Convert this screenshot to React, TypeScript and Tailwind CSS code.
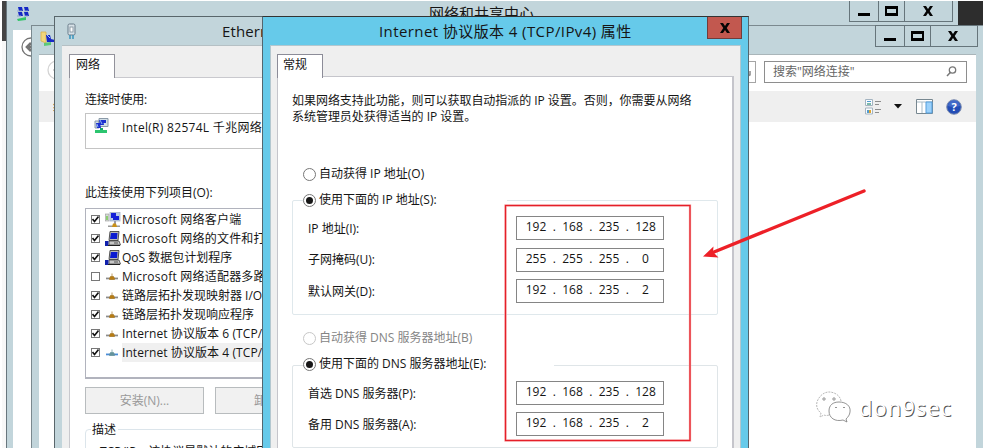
import React from "react";

const ui = "font-['Open_Sans','Noto_Sans_CJK_SC',sans-serif]";

function Computer({ tone }: { tone: string }) {
  return (
    <svg width="16" height="16" viewBox="0 0 16 16" className="shrink-0">
      {tone === "client" && (
        <>
          <rect x="0.500" y="2" width="3.500" height="7" fill="#d5dad5" stroke="#999" strokeWidth=".6" />
          <rect x="1" y="4" width="2" height="4" fill="#8ccf70" />
          <rect x="5" y=".5" width="10" height="8.500" fill="#b9cbe6" stroke="#a5b1c8" strokeWidth=".8" />
          <path d="M6 1h5v3h3v4H8V6H6z" fill="#1420d8" />
          <path d="M9 9h2v3H9z" fill="#99a" />
          <path d="M3 13.500h12v1.500H3z" fill="#999" />
          <path d="M8 11.500h3l1 3.500H7z" fill="#c99018" />
        </>
      )}
      {tone === "service" && (
        <>
          <path d="M5 .5h9l-1 9H4z" fill="#b8b8b8" stroke="#444" strokeWidth=".9" />
          <path d="M6 2h6.500l-.5 6H5z" fill="#0a1ad0" />
          <path d="M4 10h10l1.500 4H4z" fill="#c8c8c8" stroke="#444" strokeWidth=".8" />
          <path d="M0 10h3.500v5H0z" fill="#1020ad" />
          <path d="M3 14h12v1H3z" fill="#222" />
          <path d="M9 12h4" stroke="#555" />
        </>
      )}
    </svg>
  );
}

function Protocol({ blue = false }: { blue?: boolean }) {
  return (
    <svg width="16" height="16" viewBox="0 0 16 16" className="shrink-0">
      <path d="M1 9.500h12" stroke={blue ? "#3f83d2" : "#808080"} strokeWidth="1.600" />
      <path d="M1 8.700h12" stroke={blue ? "#9bc2ed" : "#c9c9c9"} strokeWidth=".8" />
      <path d="M7 4.500v3M4.500 9.500l1-2h3l1 2v1h-5z" fill={blue ? "#65939a" : "#b87c12"} stroke={blue ? "#65939a" : "#a57622"} strokeWidth=".7" />
    </svg>
  );
}

function NetIcon({ folder = false }: { folder?: boolean }) {
  return (
    <svg width="16" height="16" viewBox="0 0 16 16">
      {folder ? (
        <>
          <path d="M1 1h5v11l-5-2z" fill="#f2d77c" stroke="#dab14c" strokeWidth=".8" />
          <path d="M6 4h4l1 4 4 1v2H7z" fill="#1728c7" />
          <path d="M7 4l3 3" stroke="#a9c8f0" />
          <path d="M4 12l7-1v3l-7 1z" fill="#5dc878" />
        </>
      ) : (
        <>
          <path d="M3 1h4l1 4H4zM9 1h4l1 4h-4zM3 6h4l1 4H4zM9 6h4l1 4h-4z" fill="#1527c4" />
          <path d="M2 5h5M9 5h4M2 10h4M9 10h4" stroke="#8ea5cf" />
          <path d="M2 13l9-2v3l-8 1z" fill="#32c567" />
        </>
      )}
    </svg>
  );
}

function Adapter() {
  return (
    <svg width="17" height="18" viewBox="0 0 17 18" className="shrink-0">
      <path d="M1 4h4v7H1zM5 1.500h9v8H5z" fill="#d3e0e8" stroke="#8b9aa8" />
      <path d="M5 3h4l1 5H6zM2 6h4l1 5H3zM9 3h3v3H9z" fill="#1c30d0" />
      <path d="M6 3l2 4M3 7l1 3" stroke="#91b4ef" />
      <path d="M6 11h3v3H6z" fill="#18a768" />
      <path d="M1 13h12v3H1z" fill="#2cc56f" />
    </svg>
  );
}

function Plug() {
  return (
    <svg width="9" height="17" viewBox="0 0 9 17" className="shrink-0">
      <rect x="1" y="1" width="7" height="11" rx="1.500" fill="#d8e2e8" stroke="#697b88" />
      <rect x="3" y="4" width="3" height="5" fill="#fff" stroke="#7b8c98" strokeWidth=".8" />
      <path d="M3 12v4M6 12v4" stroke="#3994bd" strokeWidth="1.500" />
    </svg>
  );
}

function BackArrow({ faded = false }: { faded?: boolean }) {
  const color = faded ? "#d4d4d4" : "#747474";
  return (
    <svg width="20" height="20" viewBox="0 0 20 20" fill="none" stroke={color}>
      <circle cx="10" cy="10" r="9" strokeWidth="1.300" />
      <path d="M15 10H6m4-4l-4 4 4 4" strokeWidth={faded ? 1 : 2.6} />
    </svg>
  );
}

function CloseX() {
  return (
    <svg width="10" height="10" viewBox="0 0 10 10">
      <path d="M0 0h3l2 3 2-3h3L6.700 5 10 10H7L5 7l-2 3H0l3.300-5z" fill="#050505" />
    </svg>
  );
}

function WindowButtons({ second = false }: { second?: boolean }) {
  return (
    <div className={`ml-auto flex border-b border-l border-r border-[#66757b] ${second ? "h-[22px] w-[103px] border-t" : "h-[21px] w-[104px]"}`}>
      <div className="flex w-[29px] items-end justify-center border-r border-[#66757b] pb-[5px]"><span className="h-[3px] w-3 bg-black" /></div>
      <div className="flex w-[26px] items-center justify-center border-r border-[#66757b] pr-px"><span className="h-[10px] w-[13px] border-[3px] border-x-[2px] border-black" /></div>
      <div className="flex flex-1 items-center justify-center pr-[2px]"><CloseX /></div>
    </div>
  );
}

const services = [
  ["Microsoft 网络客户端", "client"],
  ["Microsoft 网络的文件和打印机共享", "service"],
  ["QoS 数据包计划程序", "service"],
  ["Microsoft 网络适配器多路传送器协议", "off"],
  ["链路层拓扑发现映射器 I/O 驱动程序", "line"],
  ["链路层拓扑发现响应程序", "line"],
  ["Internet 协议版本 6 (TCP/IPv6)", "line"],
  ["Internet 协议版本 4 (TCP/IPv4)", "selected"],
];

function CheckRow({ text, kind }: { text: string; kind: string }) {
  const spacing = text.startsWith("Microsoft") ? "tracking-[0.22px]" : text.startsWith("Internet") ? "tracking-[0.08px]" : "tracking-[0px]";
  return (
    <div className="flex h-[19px] items-center pl-[5px]">
      <span className="flex size-[9px] shrink-0 items-center justify-center border border-[#777] bg-white">
        {kind !== "off" && <svg width="7" height="7" viewBox="0 0 7 7"><path d="M.5 3l2 2.500L6.500.5" fill="none" stroke="#111" strokeWidth="1.600" /></svg>}
      </span>
      <span className="ml-[5px] mr-px">{kind === "client" || kind === "service" ? <Computer tone={kind} /> : <Protocol blue={kind === "selected"} />}</span>
      <span className={`h-[19px] shrink-0 whitespace-nowrap leading-[19px] ${spacing} ${kind === "selected" ? "w-[180px] bg-[#f0f0f0]" : ""}`}>{text}</span>
    </div>
  );
}

function Radio({ text, checked = false, disabled = false }: { text: string; checked?: boolean; disabled?: boolean }) {
  return (
    <div className={`flex h-[16px] items-center bg-white whitespace-nowrap ${disabled ? "text-[#858585]" : ""}`}>
      <span className={`mr-[3px] flex size-[13px] shrink-0 items-center justify-center rounded-full border ${disabled ? "border-[#c7c7c7]" : "border-[#777]"}`}>
        {checked && <span className="size-[7px] rounded-full bg-[#171717]" />}
      </span>
      <span className="leading-[16px]">{text}</span>
    </div>
  );
}

function AddressRow({ label, parts }: { label: string; parts: string[] }) {
  return (
    <div className="flex h-[24px] items-center pl-[15px]">
      <span className="w-[208px] shrink-0 whitespace-nowrap pt-px">{label}</span>
      <div className="flex h-[24px] w-[148px] items-center border border-[#858585] bg-white pb-[2px] pl-[4px] text-[12px]">
        {parts.map((part, i) => (
          <React.Fragment key={i}>
            <span className="w-[30px] text-center">{part}</span>
            {i < 3 && <span className="w-[6.500px] text-center">.</span>}
          </React.Fragment>
        ))}
      </div>
    </div>
  );
}

function SharingWindow() {
  return (
    <section className="absolute left-[6px] top-px h-[460px] w-[952px] border-l border-[#68767d] bg-[#c2d5db]">
      <header className="flex h-[29px] pl-[8px] pr-[5px]">
        <div className="pt-[5px]"><NetIcon /></div>
        <span className="ml-[398px] pt-[2px] text-[15px] leading-[21px] whitespace-nowrap">网络和共享中心</span>
        <WindowButtons />
      </header>
      <div className="ml-[6px] h-full bg-white pl-[8px] pt-[7px]"><BackArrow /></div>
    </section>
  );
}

function ConnectionsWindow() {
  return (
    <section className="absolute left-[31px] top-[25px] h-[430px] w-[952px] border-l border-t border-[#7b898f] bg-[#c2d5db]">
      <header className="-mt-px flex h-[29px] pl-[8px] pr-[5px]">
        <div className="pt-[6px]"><NetIcon folder /></div>
        <WindowButtons second />
      </header>
      <div className="ml-[7px] mr-[7px] h-full border-t border-[#a9b5b9] bg-white">
        <div className="flex h-[36px] items-start pr-[9px] pt-[6px]">
          <span className="ml-[8px] mt-[-1px]"><BackArrow faded /></span>
          <div className="ml-auto mr-[8px] flex h-[22px] w-[25px] items-center justify-end border border-[#a5a5a5] pr-[3px]">
            <svg width="9" height="12" viewBox="0 0 9 12"><path d="M2 2a4 4 0 1 0 5 7V5m0 4H4" fill="none" stroke="#888" strokeWidth="1.500" /></svg>
          </div>
          <div className="flex h-[22px] w-[203px] items-center border border-[#8e8e8e] pl-[8px] pr-[9px] text-[12px] text-[#666]">
            <span>搜索"网络连接"</span>
            <svg className="ml-auto" width="11" height="12" viewBox="0 0 11 12"><circle cx="6.500" cy="4" r="3.200" fill="none" stroke="#777" strokeWidth="1.300" /><path d="M4.300 6.500L1 10" stroke="#777" strokeWidth="1.500" /></svg>
          </div>
        </div>
        <div className="flex h-[31px] items-center bg-[#efefef] pl-[14px] pr-[14px]">
          <span className="text-[12px]">组织</span>
          <div className="ml-auto flex items-center">
            <svg width="17" height="16" viewBox="0 0 17 16"><path d="M.5.5h7v6h-7zM.5 9h7v6h-7z" fill="#f8fcff" stroke="#a4b4c1" /><path d="M2 2h4v1H2zM2 11h3v3H2z" fill="#519bd1" /><path d="M2 5h4" stroke="#55a48e" strokeWidth="1.500" /><path d="M4 11h2v3H4z" fill="#e1a42c" /><path d="M10 2.500h6M10 5.500h4M10 10.500h6M10 13.500h4" stroke="#8d8d8d" /></svg>
            <svg className="ml-[12px]" width="8" height="5" viewBox="0 0 8 5"><path d="M0 0h8L4 4.500z" fill="#111" /></svg>
            <svg className="ml-[14px]" width="17" height="15" viewBox="0 0 17 15"><path d="M.5.5h16v14H.5z" fill="#fff" stroke="#778790" /><path d="M1 3h15M6 3v11" stroke="#a8bbc7" /><path d="M10 3h6v11h-6z" fill="#9bd1fb" stroke="#559dda" /></svg>
            <svg className="ml-[13px]" width="16" height="16" viewBox="0 0 16 16"><circle cx="8" cy="8" r="7.300" fill="#234db6" stroke="#8190b0" /><path d="M2 7a6 6 0 0 1 12 0q-6 2-12 0" fill="#668cde" opacity=".45" /><text x="8" y="12" textAnchor="middle" fontSize="11" fontWeight="700" fill="white">?</text></svg>
          </div>
        </div>
        <div className="ml-[14px] mt-[8px] h-[53px] w-[2px] border-r border-[#b5b5b5]" />
      </div>
    </section>
  );
}

function AdapterWindow() {
  return (
    <section className="absolute left-[54px] top-[16px] h-[440px] w-[360px] border-l border-t border-[#59666b] bg-[#c2d5db] pl-[7px]">
      <header className="flex h-[28px] pl-[5px] pt-[6px]">
        <Plug />
        <span className="ml-[146px] mt-[-2px] whitespace-nowrap text-[15px] leading-[20px] tracking-[0.1px]">Ethernet0 属性</span>
      </header>
      <div className="h-full border-t border-[#b5c0c4] bg-[#efefef] pl-[7px] pt-[8px]">
        <div className="relative z-10 flex h-[24px] w-[46px] items-start border border-b-0 border-[#92929b] bg-white pl-[6px] pt-px">网络</div>
        <div className="-mt-px h-[400px] border-l border-t border-[#c9c9ce] bg-white pl-[15px]">
          <p className="pt-[13px] leading-[18px] tracking-[-0.2px]">连接时使用:</p>
          <div className="mt-[4px] flex h-[36px] border border-[#c4c4c4] pl-[8px] pt-[3px]">
            <Adapter /><span className="ml-[11px] whitespace-nowrap pt-[2px] tracking-[0.3px]">Intel(R) 82574L 千兆网络连接</span>
          </div>
          <p className="mt-[35px] leading-[18px]">此连接使用下列项目(O):</p>
          <div className="mt-[6px] h-[171px] border border-b-2 border-[#b1b3bd] pt-[1px]">
            {services.map(([text, kind]) => <CheckRow key={text} text={text} kind={kind} />)}
          </div>
          <div className="mt-[8px] flex gap-[11px] text-[#999]">
            <div className="flex h-[27px] w-[119px] items-center justify-center border border-[#b8bcbe] bg-[#f1f1f1]">安装(N)...</div>
            <div className="flex h-[27px] w-[119px] items-center justify-start border border-[#b8bcbe] bg-[#f1f1f1] pl-[38px]">卸载(U)</div>
          </div>
          <div className="mt-[15px] h-[80px] rounded border border-[#dce5eb] pl-[5px]">
            <p className="mt-[-9px] w-[27px] bg-white px-px leading-[18px]">描述</p>
            <p className="mt-[4px] pl-[9px] leading-[18px] whitespace-nowrap">TCP/IP。该协议是默认的广域网络协议</p>
          </div>
        </div>
      </div>
    </section>
  );
}

function TcpWindow() {
  return (
    <section className="absolute left-[262px] top-[16px] h-[440px] w-[487px] border-x border-t border-x-[#53666f] border-t-[#333] bg-[#66caea]">
      <header className="flex h-[28px] pr-[6px]">
        <h1 className="ml-[116px] pt-[4px] text-[15px] leading-[20px] tracking-[0.41px] whitespace-nowrap">Internet 协议版本 4 (TCP/IPv4) 属性</h1>
        <div className="ml-auto flex h-[22px] w-[35px] items-center justify-center border border-t-0 border-[#713c3b] bg-[#c2584f]"><CloseX /></div>
      </header>
      <div className="mx-[7px] h-full border border-[#b3c7cf] bg-[#efefef] px-[6px] pt-[8px]">
        <div className="relative z-10 flex h-[24px] w-[46px] items-start border border-b-0 border-[#8c8c98] bg-white pl-[5px] pt-px">常规</div>
        <div className="-mt-[2px] h-[400px] w-[457px] border border-r-2 border-[#c5c5cb] bg-white pl-[14px] pr-[14px]">
          <p className="h-[89px] pt-[16px] leading-[16px] tracking-[-0.04px] whitespace-nowrap">如果网络支持此功能，则可以获取自动指派的 IP 设置。否则，你需要从网络<br />系统管理员处获得适当的 IP 设置。</p>
          <div className="pl-[11px]"><Radio text="自动获得 IP 地址(O)" /></div>
          <div className="mt-[18px] h-[115px] w-[426px] rounded-[2px] border border-[#dfe8ec]">
            <div className="-mt-[9px] ml-[10px] w-[204px]"><Radio checked text="使用下面的 IP 地址(S):" /></div>
            <div className="mt-[8px] flex flex-col gap-[7.500px]">
              <AddressRow label="IP 地址(I):" parts={["192", "168", "235", "128"]} />
              <AddressRow label="子网掩码(U):" parts={["255", "255", "255", "0"]} />
              <AddressRow label="默认网关(D):" parts={["192", "168", "235", "2"]} />
            </div>
          </div>
          <div className="mt-[15px] pl-[11px]"><Radio disabled text="自动获得 DNS 服务器地址(B)" /></div>
          <div className="mt-[19px] h-[83px] w-[426px] rounded-[2px] border border-[#dfe5e8]">
            <div className="-mt-[10px] ml-[10px] w-[251px]"><Radio checked text="使用下面的 DNS 服务器地址(E):" /></div>
            <div className="mt-[9px] flex flex-col gap-[7px]">
              <AddressRow label="首选 DNS 服务器(P):" parts={["192", "168", "235", "128"]} />
              <AddressRow label="备用 DNS 服务器(A):" parts={["192", "168", "235", "2"]} />
            </div>
          </div>
        </div>
      </div>
    </section>
  );
}

export default function App() {
  return (
    <main className={`relative h-[448px] w-[983px] overflow-hidden bg-white text-[12px] text-[#151515] ${ui}`}>
      <div className="flex h-full">
        <div className="mt-px ml-[2px] flex h-full w-[4px] flex-col bg-[#f8f8f8]"><span className="h-[40px] bg-[#444]" /></div>
        <div className="mt-px ml-auto h-[25px] w-[26px] bg-[#2d2d2d]" />
      </div>
      <SharingWindow />
      <ConnectionsWindow />
      <AdapterWindow />
      <TcpWindow />
      <svg className="pointer-events-none absolute inset-0" width="983" height="448" viewBox="0 0 983 448">
        <rect x="505.500" y="205.500" width="184.500" height="235" fill="none" stroke="#f9b8b8" strokeWidth="2.400" />
        <rect x="505.500" y="205.500" width="184.500" height="235" fill="none" stroke="#e51f29" strokeWidth="1.300" />
        <path d="M864 191L714 252" stroke="#ed2027" strokeWidth="3.400" strokeLinecap="round" />
        <path d="M703 256.500L713.500 246.500L713 252L718.500 257.500z" fill="#ed2027" />
      </svg>
      <div className="absolute left-[816px] top-[391px] flex items-center">
        <svg width="37" height="32" viewBox="0 0 37 32">
          <path d="M13 24q-3 1-5 0l-4 2 1-4C1 19 0 15 1 11 3 5 8 1 13 1s11 3 12 9" fill="#fff" stroke="#999" strokeWidth=".7" strokeDasharray="2 1" />
          <path d="M23 11c7 0 12 4 11 10-.3 3-2 5-4 7l1 3-4-2c-8 2-14-2-14-9 0-6 4-9 10-9z" fill="#fff" stroke="#777" strokeWidth=".8" />
          <g fill="none" stroke="#777" strokeWidth=".8"><circle cx="8" cy="8" r="1.200" /><circle cx="18" cy="8" r="1.200" /><path d="M19 17q1-2 2 0M27 17q1-2 2 0" /></g>
        </svg>
        <span className="ml-[6px] text-[22px] leading-[32px] tracking-[1px] text-white [text-shadow:1px_1px_0px_#555]">don9sec</span>
      </div>
    </main>
  );
}
